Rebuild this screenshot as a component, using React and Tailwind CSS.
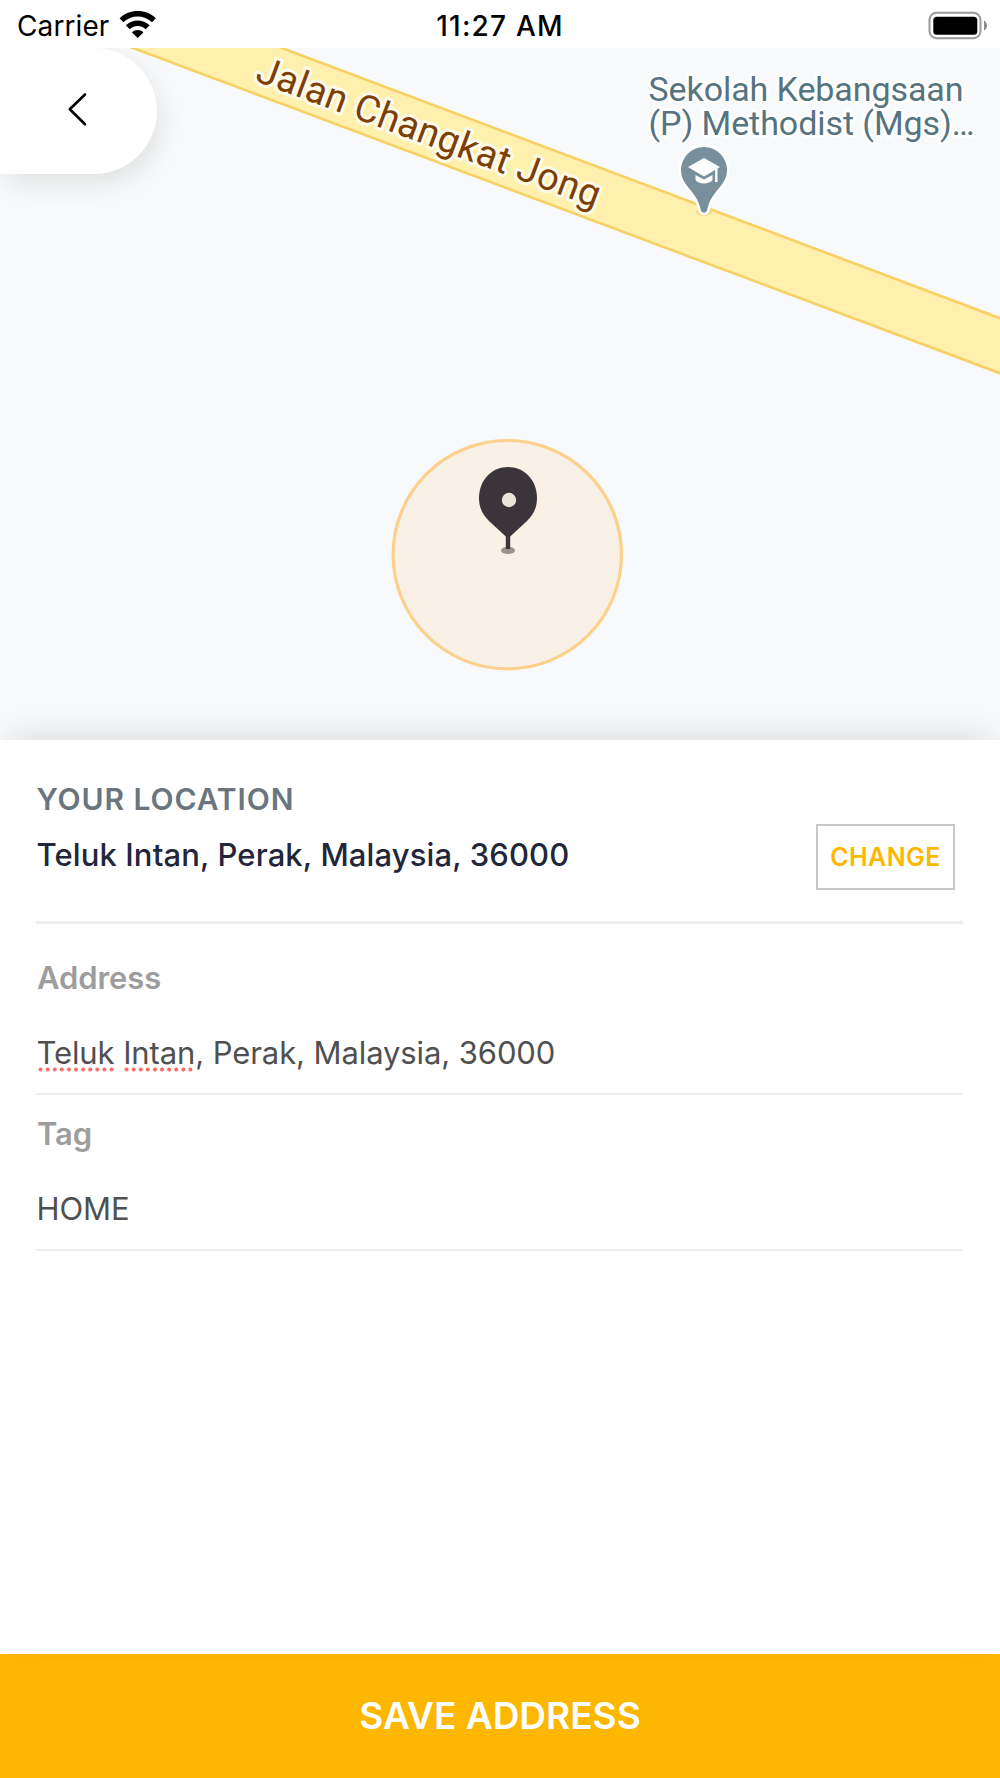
const MISSPELLED = ['Teluk', 'Intan']

function WifiIcon() {
  return (
    <svg width="38" height="28" viewBox="0 0 38 28" fill="#000">
      <path d="M0.600 7.200C10.500 -2.400 27 -2.400 36.800 7.200L33 11.200C25 3.600 12.400 3.600 4.400 11.200Z" />
      <path d="M6.800 14.300C13.500 7.800 24 7.800 30.600 14.300L26.600 18.300C22 14 15.400 14 10.800 18.300Z" />
      <path d="M18.700 27L13 21.400C16 18.200 21.400 18.200 24.400 21.400Z" />
    </svg>
  )
}

function BatteryIcon() {
  return (
    <svg width="60" height="30" viewBox="0 0 60 30">
      <rect x="1.500" y="1.8" width="51" height="25.4" rx="7" fill="none" stroke="#999" strokeWidth="2" />
      <rect x="5.300" y="5.7" width="44" height="18" rx="3.5" fill="#000" />
      <path d="M56 9.5C60 11.5 60 17.5 56 19.5Z" fill="#8a8a8a" />
    </svg>
  )
}

function StatusBar() {
  return (
    <div className="grid grid-cols-3 items-center h-12 pl-3 pr-3 text-[28px] leading-[50px] text-black">
      <div className="flex items-center gap-[10px] pl-[5px]">
        <span className="pt-px tracking-[0.1px]">Carrier</span>
        <span className="pb-[2px]"><WifiIcon /></span>
      </div>
      <span className="pt-px text-center font-medium tracking-[1.2px] whitespace-nowrap">11:27 AM</span>
      <div className="flex justify-end"><BatteryIcon /></div>
    </div>
  )
}

function MapView() {
  return (
    <div className="relative h-[692px] bg-[#f8f9fb] overflow-hidden">
      <svg className="block" width="1000" height="692" viewBox="0 48 1000 692" fontFamily="Roboto, sans-serif">
        {/* road */}
        <path d="M101 36L1010 377V322L250 36Z" fill="#fff0ae" stroke="#f8d064" strokeWidth="2.6" />
        <text
          transform="translate(254 80.500) rotate(20.5)"
          fontSize="38"
          textLength="364"
          fill="#7c3f05"
          stroke="#fffbea"
          strokeWidth="6"
          strokeLinejoin="round"
          paintOrder="stroke"
        >
          Jalan Changkat Jong
        </text>

        {/* school */}
        <g fontSize="34" fill="#567380" stroke="#fff" strokeWidth="5" strokeLinejoin="round" paintOrder="stroke">
          <text x="648.500" y="135" textLength="326">(P) Methodist (Mgs)…</text>
          <text x="648.500" y="101" textLength="315">Sekolah Kebangsaan</text>
        </g>
        <ellipse cx="704" cy="212" rx="8" ry="4" fill="#f8d891" />
        <path
          d="M704 147A23 23 0 0 1 727 170C727 186 711 191 707.5 209C706.500 214 701.500 214 700.500 209C697 191 681 186 681 170A23 23 0 0 1 704 147Z"
          fill="#78909c"
          stroke="#fff"
          strokeWidth="5"
          paintOrder="stroke"
        />
        <path d="M704 158L720 167L704 176.500L688 167Z" fill="#fff" />
        <path d="M695.500 175L704 179.500L712.500 175V180C710 184.500 698 184.500 695.500 180Z" fill="#fff" />
        <path d="M716.300 168V182" stroke="#fff" strokeWidth="2.4" />

        {/* delivery radius and pin */}
        <circle cx="507.300" cy="554.700" r="114.200" fill="#f9f0e6" stroke="#fdd08c" strokeWidth="3.2" />
        <ellipse cx="508" cy="550.400" rx="7" ry="3.700" fill="#999390" />
        <path d="M505.800 534H510.200V549H505.800Z" fill="#3b343b" />
        <path d="M508 467C524 467 537 480 537 498C537 508 533 515 527 521L508 538.500L489 521C483 515 479 508 479 498C479 480 492 467 508 467Z" fill="#3b343b" />
        <circle cx="509" cy="500" r="7.200" fill="#e9e4d8" />
      </svg>

      <button className="absolute left-0 top-0 w-[157px] h-[126px] rounded-r-full bg-white shadow-[4px_10px_28px_-4px_rgba(30,30,10,0.13)]">
        <svg width="157" height="126" viewBox="0 0 157 126" fill="none">
          <path d="M85 46.500L69.800 61.300L85 76.300" stroke="#000" strokeWidth="2.6" strokeLinecap="round" strokeLinejoin="round" />
        </svg>
      </button>
    </div>
  )
}

function Field({ label, children }) {
  return (
    <div className="pb-6 border-b-2 border-[#eeeeee]">
      <p className="pl-[1px] font-semibold text-[31px] tracking-[-0.1px] text-[#9d9d9d]">{label}</p>
      <p className="mt-[43px] pl-[0.5px] text-[31px] tracking-[-0.1px] text-[#505050]">{children}</p>
    </div>
  )
}

function Misspelled({ children }) {
  return (
    <span className="pb-px bg-[radial-gradient(circle,#ff6a62_1.6px,transparent_2.4px)] bg-[length:7.1px_5px] bg-left-bottom bg-repeat-x">
      {children}
    </span>
  )
}

export default function App() {
  return (
    <div className="flex flex-col w-[1000px] h-[1778px] bg-white font-['Inter',sans-serif]">
      <StatusBar />
      <MapView />

      <div className="relative flex-1 pl-9 pr-[37px] bg-white leading-[32px] shadow-[0_-12px_30px_-10px_rgba(30,30,10,0.14)]">
        <div className="flex justify-between h-[184px] border-b-3 border-[#eeeeee]">
          <div className="pt-[43px] pl-[0.5px]">
            <h2 className="font-semibold text-[30px] tracking-[0.9px] text-[#6b757e]">YOUR LOCATION</h2>
            <p className="mt-[24px] font-medium text-[31px] tracking-[0.12px] text-[#23263a]">Teluk Intan, Perak, Malaysia, 36000</p>
          </div>
          <button className="mt-[84px] mr-[8px] w-[139px] h-[66px] border-2 border-[#c8c8c8] font-semibold text-[25px] tracking-[0.4px] text-[#fcb700]">
            CHANGE
          </button>
        </div>

        <div className="flex flex-col gap-[23px] pt-[38px]">
          <Field label="Address">
            <Misspelled>{MISSPELLED[0]}</Misspelled> <Misspelled>{MISSPELLED[1]}</Misspelled>, Perak, Malaysia, 36000
          </Field>
          <Field label="Tag">HOME</Field>
        </div>
      </div>

      <button className="h-[124px] bg-[#fdb700] font-semibold text-[37px] text-white">SAVE ADDRESS</button>
    </div>
  )
}
